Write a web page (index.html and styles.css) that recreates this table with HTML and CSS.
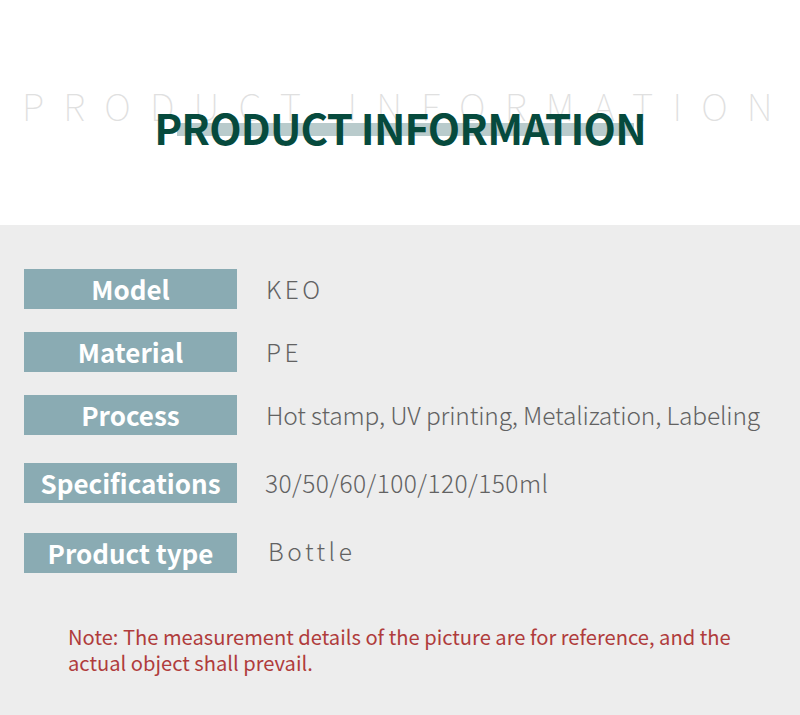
FILE: index.html
```html
<!DOCTYPE html>
<html lang="en">
<head>
<meta charset="utf-8">
<title>Product Information</title>
<link rel="stylesheet" href="styles.css">
</head>
<body>
<header class="head">
  <div class="head-bg">PRODUCT INFORMATION</div>
  <h1 class="title"><span class="title-text">PRODUCT INFORMATION</span></h1>
</header>
<main class="info">
  <div class="row r1"><div class="label">Model</div><div class="value spaced">KEO</div></div>
  <div class="row r2"><div class="label">Material</div><div class="value spaced">PE</div></div>
  <div class="row r3"><div class="label">Process</div><div class="value process">Hot stamp, UV printing, Metalization, Labeling</div></div>
  <div class="row r4"><div class="label">Specifications</div><div class="value specs">30/50/60/100/120/150ml</div></div>
  <div class="row r5"><div class="label">Product type</div><div class="value spaced bottle">Bottle</div></div>
  <p class="note">Note: The measurement details of the picture are for reference, and the actual object shall prevail.</p>
</main>
</body>
</html>
```

FILE: styles.css
```css
html, body {
  margin: 0;
  padding: 0;
}
body {
  width: 800px;
  height: 715px;
  overflow: hidden;
  background: #ededed;
  font-family: "Noto Sans CJK SC", "Noto Sans", sans-serif;
}
.head {
  position: relative;
  height: 225px;
  background: #ffffff;
}
.head-bg {
  position: absolute;
  left: 22px;
  top: 78px;
  font-size: 37px;
  font-weight: 100;
  letter-spacing: 19.2px;
  color: #e0e0e0;
  line-height: 1.5;
  white-space: nowrap;
}
.title {
  position: absolute;
  left: 0;
  right: 0;
  top: 95px;
  margin: 0;
  text-align: center;
  font-size: 42px;
  font-weight: 700;
  line-height: 1.5;
  color: #064a3d;
}
.title-text {
  position: relative;
  display: inline-block;
  letter-spacing: -0.8px;
  z-index: 0;
}
.title-text::before {
  content: "";
  position: absolute;
  left: 23px;
  right: 12px;
  top: 28px;
  height: 13px;
  background: #b9cbcc;
  z-index: -1;
}
.info {
  padding: 44px 0 0 24px;
}
.row {
  display: flex;
  align-items: center;
  height: 40px;
}
.r2 { margin-top: 23px; }
.r3 { margin-top: 23px; }
.r4 { margin-top: 28px; }
.r5 { margin-top: 30px; }
.label {
  width: 213px;
  height: 40px;
  background: #8aabb3;
  color: #ffffff;
  font-size: 26px;
  font-weight: 700;
  text-align: center;
  line-height: 39px;
  flex-shrink: 0;
}
.value {
  margin-left: 29px;
  font-size: 24.5px;
  font-weight: 300;
  color: #626262;
  line-height: 40px;
  white-space: nowrap;
}
.spaced {
  letter-spacing: 3.5px;
}
.process {
  letter-spacing: -0.15px;
}
.specs {
  letter-spacing: 0.45px;
  margin-left: 28px;
}
.bottle {
  margin-left: 31px;
  margin-top: -4px;
}
.note {
  margin: 51px 0 0 44px;
  width: 700px;
  font-size: 20.15px;
  font-weight: 400;
  line-height: 26px;
  color: #b03c3c;
}
```
